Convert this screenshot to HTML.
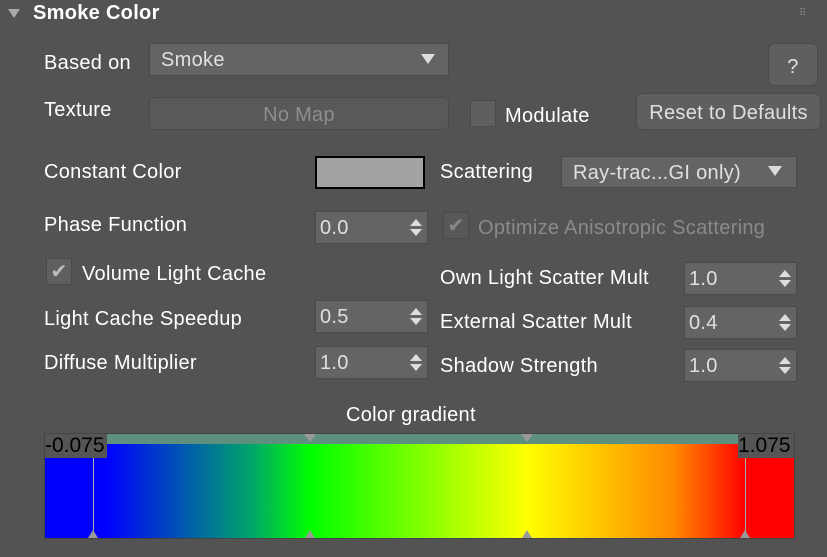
<!DOCTYPE html><html><head><style>
body{margin:0;width:827px;height:557px;background:#535353;font-family:"Liberation Sans",sans-serif;color:#fff;position:relative;overflow:hidden;font-size:20px;letter-spacing:0.3px}
.a{position:absolute;white-space:nowrap}
.f{position:absolute;background:#646464;border:1px solid #4a4a4a;box-sizing:border-box;color:#e0e0e0}
.sp:after{content:"";position:absolute;right:5px;top:7px;border:6px solid transparent;border-bottom:7px solid #ddd;border-top:0}
.sp:before{content:"";position:absolute;right:5px;bottom:7px;border:6px solid transparent;border-top:7px solid #ddd;border-bottom:0}
.cb{position:absolute;width:26px;height:27px;background:#5f5f5f;border:1px solid #4a4a4a;box-sizing:border-box;color:#bbb;font-size:20px;text-align:center;line-height:26px}
.tri{position:absolute;border:7px solid transparent;border-top:10px solid #ddd;border-bottom:0}
</style></head><body>
<div class="a" style="left:8px;top:9px;border:6px solid transparent;border-top:9px solid #aaa"></div>
<div class="a" style="left:33px;top:2px;font-weight:bold;font-size:20px">Smoke Color</div>
<div class="a" style="left:799px;top:8px;color:#888;font-size:10px;letter-spacing:-1px">⠿</div>
<div class="a" style="left:44px;top:52px">Based on</div>
<div class="f" style="left:149px;top:43px;width:300px;height:33px;padding:5px 11px">Smoke</div>
<div class="tri" style="left:421px;top:54px"></div>
<div class="a" style="left:44px;top:99px">Texture</div>
<div class="f" style="left:149px;top:97px;width:300px;height:33px;border-radius:5px;background:#595959;color:#8e8e8e;text-align:center;padding-top:6px">No Map</div>
<div class="cb" style="left:470px;top:100px"></div>
<div class="a" style="left:505px;top:105px">Modulate</div>
<div class="f" style="left:768px;top:43px;width:50px;height:43px;border-radius:6px;text-align:center;padding-top:12px;background:#5f5f5f">?</div>
<div class="f" style="left:636px;top:93px;width:185px;height:37px;border-radius:6px;text-align:center;padding-top:8px;background:#5f5f5f">Reset to Defaults</div>
<div class="a" style="left:44px;top:161px">Constant Color</div>
<div class="a" style="left:315px;top:156px;width:110px;height:33px;background:#a3a3a3;border:2px solid #000;box-sizing:border-box"></div>
<div class="a" style="left:440px;top:161px">Scattering</div>
<div class="f" style="left:561px;top:156px;width:236px;height:32px;padding:5px 11px">Ray-trac...GI only)</div>
<div class="tri" style="left:768px;top:166px"></div>
<div class="a" style="left:44px;top:214px">Phase Function</div>
<div class="f sp" style="left:315px;top:211px;width:113px;height:33px;padding:5px 4px">0.0</div>
<div class="cb" style="left:443px;top:212px;background:#585858;color:#888">✔</div>
<div class="a" style="left:478px;top:217px;color:#8a8a8a">Optimize Anisotropic Scattering</div>
<div class="cb" style="left:46px;top:258px">✔</div>
<div class="a" style="left:82px;top:263px">Volume Light Cache</div>
<div class="a" style="left:440px;top:267px">Own Light Scatter Mult</div>
<div class="f sp" style="left:684px;top:262px;width:113px;height:33px;padding:5px 4px">1.0</div>
<div class="a" style="left:44px;top:308px">Light Cache Speedup</div>
<div class="f sp" style="left:315px;top:300px;width:113px;height:33px;padding:5px 4px">0.5</div>
<div class="a" style="left:440px;top:311px">External Scatter Mult</div>
<div class="f sp" style="left:684px;top:306px;width:113px;height:33px;padding:5px 4px">0.4</div>
<div class="a" style="left:44px;top:352px">Diffuse Multiplier</div>
<div class="f sp" style="left:315px;top:346px;width:113px;height:33px;padding:5px 4px">1.0</div>
<div class="a" style="left:440px;top:355px">Shadow Strength</div>
<div class="f sp" style="left:684px;top:349px;width:113px;height:33px;padding:5px 4px">1.0</div>
<div class="a" style="left:346px;top:404px">Color gradient</div>
<div class="a" style="left:44px;top:433px;width:751px;height:106px;background:#444"></div>
<div class="a" style="left:45px;top:444px;width:749px;height:94px;background:linear-gradient(90deg,#00f 0,#00f 48px,#00f 62px,#0a6 210px,#0f0 265px,#ff0 482px,#f80 630px,#f00 700px,#f00 749px)"></div>
<div class="a" style="left:45px;top:434px;width:749px;height:10px;background:#5e9080"></div>
<div class="a" style="left:45px;top:434px;width:62px;height:24px;background:#555;color:#000;font-size:21px;letter-spacing:0;line-height:24px">-0.075</div>
<div class="a" style="left:738px;top:434px;width:56px;height:24px;background:#555;color:#000;font-size:21px;letter-spacing:0;line-height:24px">1.075</div>
<div class="a" style="left:93px;top:458px;width:1px;height:78px;background:#aaa"></div>
<div class="a" style="left:745px;top:458px;width:1px;height:78px;background:#aaa"></div>
<div class="a" style="left:304px;top:434px;border:6px solid transparent;border-top:8px solid #999;border-bottom:0"></div>
<div class="a" style="left:521px;top:434px;border:6px solid transparent;border-top:8px solid #999;border-bottom:0"></div>
<div class="a" style="left:88px;top:530px;border:5px solid transparent;border-bottom:8px solid #999;border-top:0"></div>
<div class="a" style="left:305px;top:530px;border:5px solid transparent;border-bottom:8px solid #999;border-top:0"></div>
<div class="a" style="left:522px;top:530px;border:5px solid transparent;border-bottom:8px solid #999;border-top:0"></div>
<div class="a" style="left:740px;top:530px;border:5px solid transparent;border-bottom:8px solid #999;border-top:0"></div>
</body></html>
